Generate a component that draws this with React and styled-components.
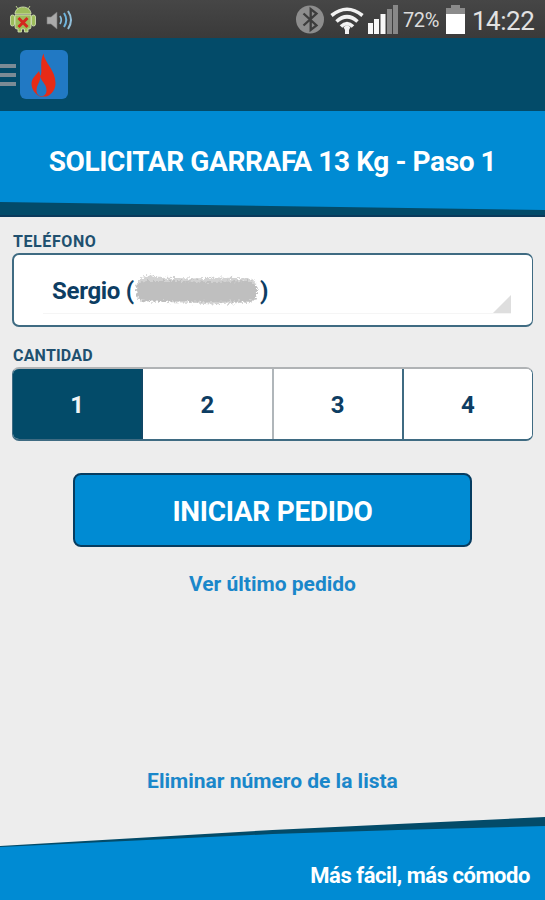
import React, { useState } from 'react';
import styled, { createGlobalStyle, ThemeProvider } from 'styled-components';

const theme = {
  colors: {
    primary: '#008bd3',
    dark: '#034b69',
    text: '#0d3d63',
    link: '#1a87ca',
    border: '#3f6b82',
    surface: '#ededed',
  },
};

const GlobalStyle = createGlobalStyle`
  * {
    box-sizing: border-box;
  }

  body {
    margin: 0;
    font-family: Roboto, sans-serif;
    background: #ededed;
  }

  button {
    font-family: inherit;
    border: 0;
    padding: 0;
    margin: 0;
    background: none;
    cursor: pointer;
  }
`;

const Screen = styled.div`
  display: flex;
  flex-direction: column;
  width: 545px;
  height: 900px;
  overflow: hidden;
  background: ${props => props.theme.colors.surface};
`;

const StatusBar = styled.div`
  display: flex;
  align-items: center;
  justify-content: space-between;
  flex: none;
  height: 38px;
  background: linear-gradient(#464646, #3a3a3a);
`;

const StatusGroup = styled.div`
  display: flex;
  align-items: center;

  svg {
    display: block;
    flex: none;
  }
`;

const StatusItem = styled.div`
  width: ${props => props.$width}px;
`;

const Battery = styled.span`
  width: 43px;
  padding-top: 2px;
  color: #dcdcdc;
  font-size: 20px;
  line-height: 38px;
  letter-spacing: -0.4px;
  white-space: nowrap;
`;

const Clock = styled.span`
  width: 79px;
  padding: 4px 0 0 6px;
  color: #e2e2e2;
  font-size: 26px;
  line-height: 34px;
  letter-spacing: -0.5px;
  white-space: nowrap;
`;

const AppBar = styled.header`
  display: flex;
  align-items: center;
  gap: 4px;
  flex: none;
  height: 73px;
  background: ${props => props.theme.colors.dark};
`;

const MenuButton = styled.button`
  display: flex;
  flex-direction: column;
  gap: 5px;
  width: 16px;
`;

const MenuLine = styled.span`
  height: 4px;
  background: #7b8b95;
`;

const Logo = styled.div`
  display: flex;
  align-items: center;
  justify-content: center;
  width: 48px;
  height: 49px;
  border-radius: 6px;
  background: #2179c4;
`;

const TitleBar = styled.div`
  display: grid;
  flex: none;
  height: 106px;
  border-bottom: 2px solid #0b3a5c;
  background: ${props => props.theme.colors.dark};
`;

const TitleFace = styled.div`
  padding: 31px 0 0;
  background: ${props => props.theme.colors.primary};
  clip-path: polygon(0 0, 100% 0, 100% 99px, 0 91px);
`;

const Title = styled.h1`
  margin: 0;
  color: #fff;
  font-size: 28px;
  font-weight: 700;
  line-height: 40px;
  letter-spacing: -0.4px;
  text-align: center;
  white-space: nowrap;
`;

const Content = styled.main`
  display: flex;
  flex-direction: column;
  flex: 1;
  padding: 13px 12px 0;
`;

const Label = styled.label`
  padding-left: 1px;
  margin-top: ${props => props.$top || 0}px;
  color: #20506f;
  font-size: 16px;
  font-weight: 700;
  line-height: 23px;
  letter-spacing: ${props => props.$spacing || 0}px;
`;

const Field = styled.button`
  display: flex;
  height: 74px;
  padding: 0 21px 12px 29px;
  border: 2px solid ${props => props.theme.colors.border};
  border-right-width: 1px;
  border-radius: 7px;
  background: #fff;
`;

const FieldValue = styled.span`
  display: flex;
  align-items: center;
  flex: 1;
  height: 59px;
  padding: 14px 0 0 9px;
  border-bottom: 1px solid #f5f5f5;
  color: ${props => props.theme.colors.text};
  font-size: 24px;
  font-weight: 700;
  letter-spacing: -0.3px;
  white-space: pre;
`;

const Corner = styled.span`
  align-self: flex-end;
  width: 18px;
  height: 18px;
  margin-left: auto;
  background: #dedede;
  clip-path: polygon(100% 0, 100% 100%, 0 100%);
`;

const Segments = styled.div`
  display: flex;
  height: 74px;
  border: 1px solid ${props => props.theme.colors.border};
  border-top: 2px solid #b0b3b5;
  border-bottom-width: 2px;
  border-radius: 7px;
  overflow: hidden;
  background: #fff;
`;

const Segment = styled.button`
  flex: 1;
  padding-top: 2px;
  border-left: ${props => (props.$divider ? '2px' : '0')} solid ${props => props.$divider};
  background: ${props => (props.$active ? props.theme.colors.dark : '#fff')};
  color: ${props => (props.$active ? '#f0f4f6' : props.theme.colors.text)};
  font-size: 24px;
  font-weight: 700;
`;

const SubmitButton = styled.button`
  align-self: center;
  width: 399px;
  height: 74px;
  padding-top: 2px;
  margin-top: 32px;
  border: 2px solid #063c60;
  border-radius: 8px;
  background: ${props => props.theme.colors.primary};
  color: #fff;
  font-size: 28px;
  font-weight: 700;
  letter-spacing: -0.3px;
`;

const LinkButton = styled.button`
  align-self: center;
  height: 30px;
  margin-top: ${props => props.$top}px;
  color: ${props => props.theme.colors.link};
  font-size: 21px;
  font-weight: 700;
  white-space: nowrap;
`;

const Footer = styled.footer`
  flex: none;
  height: 83px;
  background: ${props => props.theme.colors.dark};
  clip-path: polygon(0 29px, 50% 13px, 73% 7px, 100% 0, 100% 100%, 0 100%);
`;

const FooterFace = styled.div`
  display: flex;
  align-items: flex-end;
  justify-content: flex-end;
  height: 100%;
  padding: 0 15px 9px 0;
  background: ${props => props.theme.colors.primary};
  clip-path: polygon(0 30px, 50% 17px, 73% 13px, 100% 9px, 100% 100%, 0 100%);
`;

const Slogan = styled.span`
  color: #fff;
  font-size: 22px;
  font-weight: 700;
  line-height: 30px;
  letter-spacing: -0.45px;
  white-space: nowrap;
`;

const AndroidIcon = () => (
  <svg width="40" height="38" viewBox="0 0 40 38">
    <path d="M18 9l-2-3M28 9l2-3" stroke="#b9cf8a" strokeWidth="1" />
    <g fill="#9dbd5c" stroke="#dbe8bb" strokeWidth="0.8">
      <path d="M15 14c0-4 3.500-7 8-7s8 3 8 7z" />
      <path d="M15 15h16v12q0 2-2 2h-1v3h-3.500v-3h-3v3H18v-3h-1q-2 0-2-2z" />
      <rect x="10.500" y="15" width="4" height="11" rx="2" />
      <rect x="31.500" y="15" width="4" height="11" rx="2" />
    </g>
    <path d="M18.500 18l9 9M27.500 18l-9 9" stroke="#d3281e" strokeWidth="3" />
  </svg>
);

const SpeakerIcon = () => (
  <svg width="28" height="38" viewBox="0 0 28 38" fill="none">
    <path d="M1 17h4l6-5v17l-6-5H1z" fill="#aaa" stroke="#777" strokeWidth="0.600" />
    <path d="M14 16q2.500 4 0 8" stroke="#88bcd9" strokeWidth="1.700" />
    <path d="M18 13q4.500 7 0 14" stroke="#6eb5de" strokeWidth="2" />
    <path d="M22 11q6 9 0 18" stroke="#91bed8" strokeWidth="2" />
  </svg>
);

const BluetoothIcon = () => (
  <svg width="29" height="38" viewBox="0 0 29 38" fill="none">
    <circle cx="14" cy="19.500" r="14" fill="#8d8d8d" />
    <path d="M7.500 13.500l13 12-5.800 4.500V9l5.800 4.500-13 12" stroke="#3d3d3d" strokeWidth="2.300" />
  </svg>
);

const WifiIcon = () => (
  <svg width="34" height="38" viewBox="0 0 34 38" fill="none" stroke="#f2f2f2">
    <path d="M1.500 15.500q15.500-12.500 31 0" strokeWidth="3.600" />
    <path d="M6.500 21.500q10.500-9.500 21 0" strokeWidth="3.600" />
    <path d="M11 26.500q6-6 12 0" strokeWidth="3.600" />
    <path d="M13.500 27l3.500-2 3.500 2-1.500 3v4h-4v-4z" fill="#f2f2f2" stroke="none" />
  </svg>
);

const SignalIcon = () => (
  <svg width="31" height="38" viewBox="0 0 31 38">
    <path d="M0 23h5v11H0zM6 19h5v15H6zM12.500 14h5v20h-5z" fill="#f8f8f8" />
    <path d="M19 9h5v25h-5zM25 5h5v29h-5z" fill="#888" />
  </svg>
);

const BatteryIcon = () => (
  <svg width="20" height="38" viewBox="0 0 20 38">
    <path d="M5 5h9v3h5v7H0V8h5z" fill="#8b8b8b" />
    <path d="M0 14h19v20H0z" fill="#fff" />
  </svg>
);

const FlameIcon = () => (
  <svg width="26" height="44" viewBox="0 0 26 44">
    <path
      d="M12.500 0.500C13 9 24.500 17 24.500 30c0 6-3 11-9 13.500H9C4 41 0.500 36 0.500 31c0-6 4-8 7.500-13l1.500 5C12 18 8 10 12.500 0.500z"
      fill="#e72b16"
    />
    <path d="M9.500 22.500c0 6 6 8 6 14.500 0 4-2 6-5 6s-5-2-5-6c0-5 4-8 4-14.500z" fill="#2179c4" />
  </svg>
);

const Scribble = () => (
  <svg width="126" height="34" viewBox="0 0 126 34" overflow="visible">
    <defs>
      <filter id="rough" filterUnits="userSpaceOnUse" x="-6" y="-4" width="138" height="42">
        <feTurbulence type="fractalNoise" baseFrequency="0.45" numOctaves="2" seed="4" />
        <feDisplacementMap in="SourceGraphic" scale="7" xChannelSelector="R" yChannelSelector="G" />
      </filter>
    </defs>
    <g fill="none" strokeLinecap="round" strokeLinejoin="round" filter="url(#rough)">
      <path d="M9 12q8-5 14-1l36 1 26-1 30 1M10 20l40 1 28 2 37-2" stroke="#d2d2d2" strokeWidth="15" />
      <path d="M12 17l32 0 32 1 38-1" stroke="#bfbfbf" strokeWidth="20" />
    </g>
  </svg>
);

const options = [
  { value: 1 },
  { value: 2, divider: '#0f4766' },
  { value: 3, divider: '#b0b6ba' },
  { value: 4, divider: '#3f6b82' },
];

const App = () => {
  const [amount, setAmount] = useState(1);

  return (
    <ThemeProvider theme={theme}>
      <GlobalStyle />
      <Screen>
        <StatusBar>
          <StatusGroup>
            <StatusItem $width={46}>
              <AndroidIcon />
            </StatusItem>
            <SpeakerIcon />
          </StatusGroup>
          <StatusGroup>
            <StatusItem $width={34}>
              <BluetoothIcon />
            </StatusItem>
            <StatusItem $width={38}>
              <WifiIcon />
            </StatusItem>
            <StatusItem $width={35}>
              <SignalIcon />
            </StatusItem>
            <Battery>72%</Battery>
            <BatteryIcon />
            <Clock>14:22</Clock>
          </StatusGroup>
        </StatusBar>

        <AppBar>
          <MenuButton aria-label="Menú">
            <MenuLine />
            <MenuLine />
            <MenuLine />
          </MenuButton>
          <Logo>
            <FlameIcon />
          </Logo>
        </AppBar>

        <TitleBar>
          <TitleFace>
            <Title>SOLICITAR GARRAFA 13 Kg - Paso 1</Title>
          </TitleFace>
        </TitleBar>

        <Content>
          <Label $spacing={0.6}>TELÉFONO</Label>
          <Field>
            <FieldValue>
              Sergio (<Scribble />)
              <Corner />
            </FieldValue>
          </Field>

          <Label $top={17} $spacing={0.2}>CANTIDAD</Label>
          <Segments>
            {options.map(option => (
              <Segment
                key={option.value}
                $divider={option.divider}
                $active={amount === option.value}
                onClick={() => setAmount(option.value)}
              >
                {option.value}
              </Segment>
            ))}
          </Segments>

          <SubmitButton>INICIAR PEDIDO</SubmitButton>
          <LinkButton $top={22}>Ver último pedido</LinkButton>
          <LinkButton $top={167}>Eliminar número de la lista</LinkButton>
        </Content>

        <Footer>
          <FooterFace>
            <Slogan>Más fácil, más cómodo</Slogan>
          </FooterFace>
        </Footer>
      </Screen>
    </ThemeProvider>
  );
};

export default App;
